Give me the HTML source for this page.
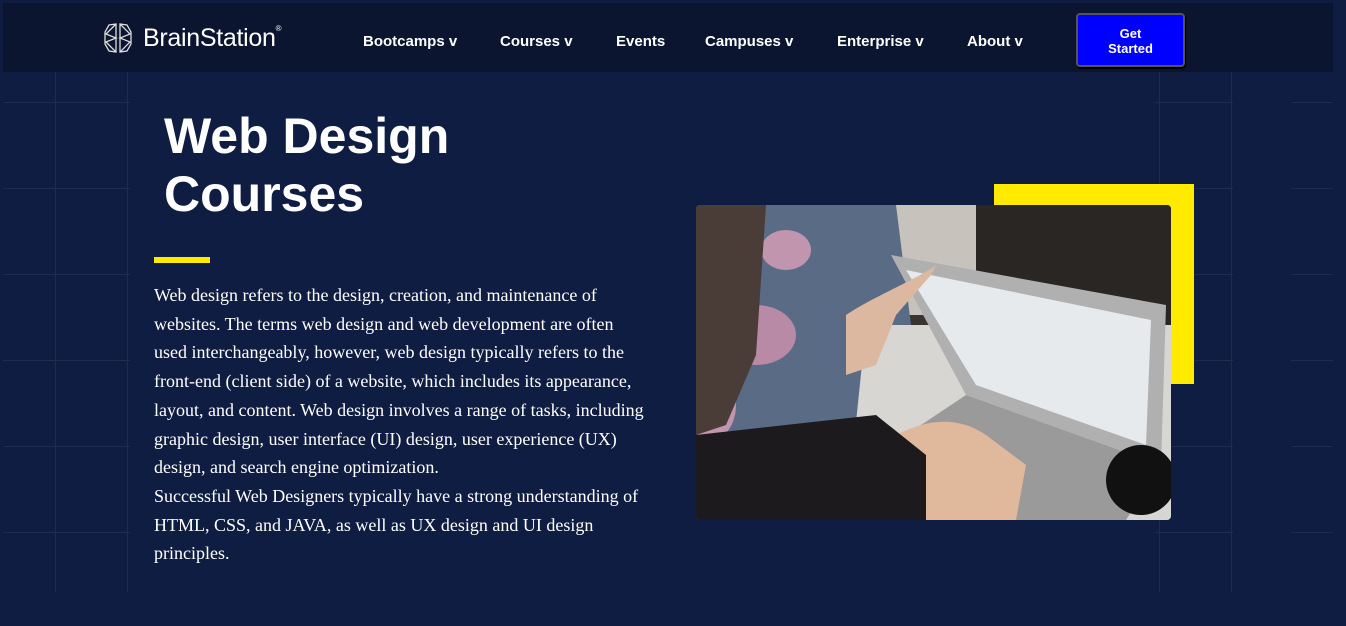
<!DOCTYPE html>
<html><head><style>
*{margin:0;padding:0;box-sizing:border-box}
body{width:1346px;height:626px;background:#101d42;position:relative;overflow:hidden;font-family:"Liberation Sans",sans-serif}
.nav{position:absolute;left:3px;top:3px;width:1330px;height:69px;background:#0c1530}
.nav a{position:absolute;top:30px;color:#fff;font-weight:bold;font-size:15px;text-decoration:none}
.logo{position:absolute;left:101px;top:21px;color:#fff;font-size:25px;letter-spacing:-0.3px}
.btn{position:absolute;left:1076px;top:13px;width:109px;height:54px;background:#0000ff;border:2px solid #555;border-radius:4px;box-shadow:1px 2px 1px #000;color:#fff;font-weight:bold;font-size:13px;text-align:center;line-height:15px;padding-top:11px}
.gl{position:absolute;background:#222c4a}
h1{position:absolute;left:164px;top:107px;color:#fff;font-size:50px;line-height:58px;font-weight:bold}
.bar{position:absolute;left:154px;top:257px;width:56px;height:6px;background:#ffea00}
p{position:absolute;left:154px;top:281px;width:496px;color:#fff;font-family:"Liberation Serif",serif;font-size:18px;line-height:28.7px}
</style></head><body>
<div class="gl" style="left:55px;top:72px;width:1px;height:520px"></div>
<div class="gl" style="left:127px;top:72px;width:1px;height:520px"></div>
<div class="gl" style="left:1159px;top:72px;width:1px;height:520px"></div>
<div class="gl" style="left:1231px;top:72px;width:1px;height:520px"></div>
<div class="gl" style="left:3px;top:102px;width:127px;height:1px"></div>
<div class="gl" style="left:3px;top:188px;width:127px;height:1px"></div>
<div class="gl" style="left:3px;top:274px;width:127px;height:1px"></div>
<div class="gl" style="left:3px;top:360px;width:127px;height:1px"></div>
<div class="gl" style="left:3px;top:446px;width:127px;height:1px"></div>
<div class="gl" style="left:3px;top:532px;width:127px;height:1px"></div>
<div class="gl" style="left:1155px;top:102px;width:78px;height:1px"></div>
<div class="gl" style="left:1291px;top:102px;width:42px;height:1px"></div>
<div class="gl" style="left:1155px;top:188px;width:78px;height:1px"></div>
<div class="gl" style="left:1291px;top:188px;width:42px;height:1px"></div>
<div class="gl" style="left:1155px;top:274px;width:78px;height:1px"></div>
<div class="gl" style="left:1291px;top:274px;width:42px;height:1px"></div>
<div class="gl" style="left:1155px;top:360px;width:78px;height:1px"></div>
<div class="gl" style="left:1291px;top:360px;width:42px;height:1px"></div>
<div class="gl" style="left:1155px;top:446px;width:78px;height:1px"></div>
<div class="gl" style="left:1291px;top:446px;width:42px;height:1px"></div>
<div class="gl" style="left:1155px;top:532px;width:78px;height:1px"></div>
<div class="gl" style="left:1291px;top:532px;width:42px;height:1px"></div>
<div class="nav">
<svg style="position:absolute;left:100px;top:19px" width="30" height="32" viewBox="0 0 30 32" fill="none" stroke="#ddd" stroke-width="1.3"><path d="M13 2L6 3 2 10 2 22 6 29 13 30Z M13 2L3 12 13 16 3 20 13 30 M17 2L24 3 28 10 28 22 24 29 17 30Z M17 2L27 12 17 16 27 20 17 30"/></svg>
<div class="logo" style="left:140px">BrainStation<sup style="font-size:8px;vertical-align:top">®</sup></div>
<a style="left:360px">Bootcamps v</a>
<a style="left:497px">Courses v</a>
<a style="left:613px">Events</a>
<a style="left:702px">Campuses v</a>
<a style="left:834px">Enterprise v</a>
<a style="left:964px">About v</a>
</div>
<div class="btn">Get<br>Started</div>
<h1>Web Design<br>Courses</h1>
<div class="bar"></div>
<p>Web design refers to the design, creation, and maintenance of websites. The terms web design and web development are often used interchangeably, however, web design typically refers to the front-end (client side) of a website, which includes its appearance, layout, and content. Web design involves a range of tasks, including graphic design, user interface (UI) design, user experience (UX) design, and search engine optimization.<br>Successful Web Designers typically have a strong understanding of HTML, CSS, and JAVA, as well as UX design and UI design principles.</p>
<div style="position:absolute;left:994px;top:184px;width:200px;height:200px;background:#ffea00"></div>
<svg style="position:absolute;left:696px;top:205px;border-radius:4px" width="475" height="315" viewBox="0 0 475 315">
<rect width="475" height="315" fill="#3a3430"/>
<rect x="180" y="0" width="100" height="110" fill="#c8c2bc"/>
<rect x="280" y="0" width="195" height="160" fill="#2a2624"/>
<path d="M0 0H200L215 120 200 250 150 315H0Z" fill="#5a6b85"/>
<ellipse cx="60" cy="130" rx="40" ry="30" fill="#b98aa5"/>
<ellipse cx="15" cy="200" rx="25" ry="35" fill="#c095ad"/>
<ellipse cx="90" cy="45" rx="25" ry="20" fill="#c095ad"/>
<path d="M0 0H70L60 150 30 220 0 230Z" fill="#4a3c36"/>
<path d="M170 120H475V315H150Z" fill="#d8d6d2"/>
<path d="M195 50L470 100 465 260 270 190Z" fill="#b0b0b0"/>
<path d="M210 65L455 115 450 240 280 180Z" fill="#e6eaec"/>
<path d="M270 190L465 260 430 315H250L210 230Z" fill="#9a9a9a"/>
<path d="M150 110C180 90 220 75 240 60L235 70 200 110 180 160 150 170Z" fill="#dcb8a0"/>
<path d="M200 230C230 215 260 210 290 230L330 260 320 315H230Z" fill="#e0b89c"/>
<path d="M0 230L180 210 230 250 230 315H0Z" fill="#1c1a1c"/>
<circle cx="445" cy="275" r="35" fill="#111"/>
</svg>
</body></html>
